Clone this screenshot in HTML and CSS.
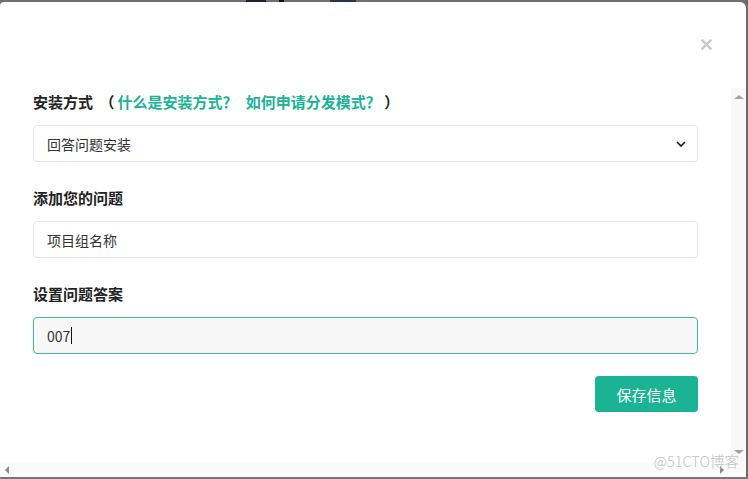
FILE: index.html
```html
<!DOCTYPE html>
<html lang="zh-CN">
<head>
<meta charset="utf-8">
<title>安装方式</title>
<link rel="stylesheet" href="styles.css">
</head>
<body>
<div class="page">
  <div class="topline">
    <span class="bit bit-a"></span>
    <span class="bit bit-b"></span>
    <span class="bit bit-c"></span>
  </div>
  <div class="middle">
    <div class="layer">
      <div class="layer-title">
        <span class="close" aria-label="关闭">
          <svg width="11" height="11" viewBox="0 0 11 11"><path d="M1.5 1.5 L9.5 9.5 M9.5 1.5 L1.5 9.5" stroke="#c9c9c9" stroke-width="2.4" stroke-linecap="square"/></svg>
        </span>
      </div>
      <div class="layer-content">
        <div class="view">
          <div class="form">
            <div class="group">
              <div class="label">安装方式 <span class="lp">（</span><a class="link">什么是安装方式？</a> <a class="link link2">如何申请分发模式？</a> ）</div>
              <div class="field select">
                <span>回答问题安装</span>
                <svg class="chev" width="10" height="6" viewBox="0 0 10 6"><path d="M1 1 L5 5 L9 1" fill="none" stroke="#111" stroke-width="1.6"/></svg>
              </div>
            </div>
            <div class="group">
              <div class="label">添加您的问题</div>
              <div class="field">项目组名称</div>
            </div>
            <div class="group">
              <div class="label">设置问题答案</div>
              <div class="field focused">007<span class="caret"></span></div>
            </div>
            <div class="actions">
              <button class="btn">保存信息</button>
            </div>
          </div>
          <div class="vscroll">
            <span class="arr arr-up"></span>
            <span class="arr arr-down"></span>
          </div>
        </div>
        <div class="hscroll">
          <div class="htrack">
            <span class="arr arr-left"></span>
            <span class="arr arr-right"></span>
          </div>
          <div class="corner"></div>
        </div>
        <div class="watermark">@51CTO博客</div>
      </div>
    </div>
    <div class="rightline"></div>
  </div>
  <div class="bottomline"></div>
</div>
</body>
</html>
```

FILE: styles.css
```css
* { box-sizing: border-box; }
html, body { margin: 0; padding: 0; background: #6f6f6f; }
body {
  font-family: "Noto Sans CJK SC", "Noto Sans", sans-serif;
  color: #333;
}
.page {
  width: 748px;
  height: 479px;
  display: flex;
  flex-direction: column;
  background: #6f6f6f;
  overflow: hidden;
}
.topline {
  height: 2px;
  display: flex;
  align-items: flex-start;
}
.bit { display: block; height: 2px; }
.bit-a { width: 20px; margin-left: 246px; background: #1d2330; }
.bit-b { width: 5px; margin-left: 13px; background: #111; }
.bit-c { width: 26px; margin-left: 46px; background: #2a3550; }
.middle {
  flex: 1;
  display: flex;
  min-height: 0;
}
.layer {
  flex: 1;
  background: #fff;
  border-radius: 4px 6px 0 0;
  display: flex;
  flex-direction: column;
  position: relative;
}
.rightline { width: 2px; background: #6a6a6a; }
.bottomline { height: 2px; background: #777; }

.layer-title {
  height: 86px;
  display: flex;
  justify-content: flex-end;
  align-items: flex-start;
  padding: 37px 34px 0 0;
}
.close { display: block; width: 11px; height: 11px; }
.close svg { display: block; }

.layer-content {
  flex: 1;
  display: flex;
  flex-direction: column;
  min-height: 0;
}
.view {
  flex: 1;
  display: flex;
  min-height: 0;
}
.form {
  flex: 1;
  padding: 4px 33px 0 33px;
}
.group { margin-bottom: 26px; }
.label {
  height: 19px;
  line-height: 19px;
  font-size: 15px;
  font-weight: 700;
  color: #222;
  margin-bottom: 14px;
  white-space: nowrap;
}
.lp { margin-left: 3px; margin-right: 3px; }
.link { color: #1ab394; text-decoration: none; }
.link2 { margin-left: 5px; }
.field {
  height: 37px;
  border: 1px solid #e5e6e7;
  border-radius: 4px;
  background: #fff;
  padding: 0 13px;
  display: flex;
  align-items: center;
  font-size: 14px;
  color: #333;
}
.select { justify-content: space-between; padding-right: 11px; }
.chev { display: block; }
.focused {
  background: #f7f7f7;
  border-color: #3dbf9f;
}
.caret {
  display: inline-block;
  width: 1px;
  height: 17px;
  background: #111;
  margin-left: 1px;
}
.group:nth-child(3) { margin-bottom: 22px; }
.actions { display: flex; justify-content: flex-end; }
.btn {
  width: 103px;
  height: 36px;
  border: none;
  border-radius: 4px;
  background: #1ab394;
  color: #fff;
  font-family: "Noto Sans CJK SC", sans-serif;
  font-size: 15px;
  padding: 0;
}

.vscroll {
  width: 15px;
  background: #f8f8f8;
  display: flex;
  flex-direction: column;
  justify-content: space-between;
  align-items: center;
  padding: 7px 0 8px 0;
}
.arr { display: block; width: 0; height: 0; border-style: solid; }
.arr-up { border-width: 0 5px 4px 5px; border-color: transparent transparent #a3a3a3 transparent; }
.arr-down { border-width: 4px 5px 0 5px; border-color: #a3a3a3 transparent transparent transparent; }
.hscroll {
  height: 15px;
  display: flex;
}
.htrack {
  flex: 1;
  background: #fafafa;
  display: flex;
  justify-content: space-between;
  align-items: center;
  padding: 0 7px 0 5px;
}
.arr-left { border-width: 4px 4px 4px 0; border-color: transparent #8a8a8a transparent transparent; }
.arr-right { border-width: 4px 0 4px 4px; border-color: transparent transparent transparent #8a8a8a; }
.corner { width: 15px; background: #fafafa; }
.watermark {
  position: absolute;
  right: 7px;
  bottom: 8px;
  font-family: "Noto Sans CJK SC", sans-serif;
  font-weight: 300;
  font-size: 14.5px;
  line-height: 16px;
  color: #c4c4c4;
}
```
